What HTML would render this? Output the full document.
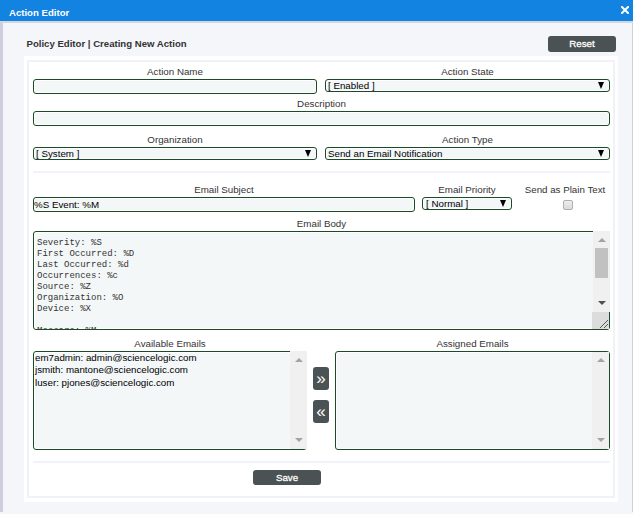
<!DOCTYPE html>
<html><head><meta charset="utf-8">
<style>
*{box-sizing:border-box;margin:0;padding:0}
html,body{width:633px;height:514px;overflow:hidden;background:#f5f6fa;font-family:"Liberation Sans",sans-serif;font-size:9.75px;color:#333}
.a{position:absolute}
.t{position:absolute;line-height:11px;white-space:nowrap}
.c{text-align:center}
.inp{position:absolute;border:1px solid #1c4a26;border-radius:3px;background:#f3f7f8;box-shadow:inset 0 0 0 1px #fff}
.sel{position:absolute;border:1px solid #1c4a26;border-radius:3px;background:#f3f7f8;box-shadow:inset 0 0 0 1px #fff;color:#000;line-height:11px;white-space:nowrap;overflow:hidden}
.arr{position:absolute;top:2px;width:6px;height:7px;background:#000;clip-path:polygon(0 0,100% 0,50% 100%)}
.btn{position:absolute;background:#4b5253;border-radius:3px;color:#fff;text-align:center}
.sep{position:absolute;height:2px;background:#f2f3f8}
.sb{position:absolute;background:#f0f0f0}
.up{position:absolute;width:0;height:0;border-left:4px solid transparent;border-right:4px solid transparent;border-bottom:4px solid #a3a3a3}
.dn{position:absolute;width:0;height:0;border-left:4px solid transparent;border-right:4px solid transparent;border-top:4px solid #a3a3a3}
.mono{font-family:"Liberation Mono",monospace;font-size:9px;line-height:11px;color:#333;white-space:pre}
</style></head><body>
<!-- title bar -->
<div class="a" style="left:0;top:0;width:633px;height:21px;background:#1283e1"></div>
<div class="t" style="left:9px;top:7px;color:#fff;font-weight:bold;font-size:9.6px">Action Editor</div>
<svg class="a" style="left:621px;top:6px" width="8" height="8" viewBox="0 0 8 8"><path d="M1 1L7 7M7 1L1 7" stroke="#fff" stroke-width="2" stroke-linecap="square"/></svg>
<div class="a" style="left:0;top:21px;width:633px;height:2px;background:#d3d5df"></div>
<div class="a" style="left:0;top:23px;width:3px;height:489px;background:#cdd0dc"></div>
<div class="a" style="left:632px;top:23px;width:1px;height:489px;background:#cdd0dc"></div>

<!-- header -->
<div class="t" style="left:26.5px;top:38px;font-weight:bold;color:#333;font-size:9.6px">Policy Editor | Creating New Action</div>
<div class="btn" style="left:548px;top:36px;width:68px;height:16px;line-height:16px;-webkit-text-stroke:0.3px #fff">Reset</div>

<!-- panel -->
<div class="a" style="left:24px;top:56px;width:594px;height:446px;background:#fff"></div>
<div class="a" style="left:27px;top:60px;width:588px;height:438px;border:2px solid #f1f2f7"></div>

<!-- row 1 -->
<div class="t c" style="left:33px;top:66px;width:284px">Action Name</div>
<div class="inp" style="left:33px;top:79px;width:284px;height:15px"></div>
<div class="t c" style="left:325px;top:66px;width:285px">Action State</div>
<div class="sel" style="left:325px;top:79px;width:285px;height:13px;padding-left:2px">[ Enabled ]<div class="arr" style="left:272px"></div></div>

<!-- row 2 -->
<div class="t c" style="left:33px;top:98px;width:577px">Description</div>
<div class="inp" style="left:33px;top:111px;width:577px;height:15px"></div>

<!-- row 3 -->
<div class="t c" style="left:33px;top:134px;width:284px">Organization</div>
<div class="sel" style="left:33px;top:147px;width:284px;height:13px;padding-left:2px">[ System ]<div class="arr" style="left:271px"></div></div>
<div class="t c" style="left:325px;top:134px;width:285px">Action Type</div>
<div class="sel" style="left:325px;top:147px;width:285px;height:13px;padding-left:2px">Send an Email Notification<div class="arr" style="left:272px"></div></div>

<div class="sep" style="left:33px;top:171px;width:577px"></div>

<!-- row 4 -->
<div class="t c" style="left:33px;top:184px;width:382px">Email Subject</div>
<div class="inp" style="left:33px;top:197px;width:382px;height:15px;color:#000;line-height:13px;padding-left:0px">%S Event: %M</div>
<div class="t c" style="left:422px;top:184px;width:90px">Email Priority</div>
<div class="sel" style="left:422px;top:197px;width:90px;height:13px;padding-left:3px">[ Normal ]<div class="arr" style="left:77px"></div></div>
<div class="t c" style="left:520px;top:184px;width:90px">Send as Plain Text</div>
<div class="a" style="left:563px;top:200px;width:10px;height:10px;border:1px solid #b0b0b0;border-radius:2px;background:linear-gradient(#ededed,#dadada)"></div>

<!-- body -->
<div class="t c" style="left:33px;top:218px;width:577px">Email Body</div>
<div class="inp" style="left:33px;top:231px;width:577px;height:99px;overflow:hidden">
<div class="mono a" style="left:3px;top:6px">Severity: %S
First Occurred: %D
Last Occurred: %d
Occurrences: %c
Source: %Z
Organization: %O
Device: %X

Message: %M</div>
</div>
<div class="sb" style="left:593px;top:231px;width:17px;height:81px"></div>
<div class="up" style="left:598px;top:238px"></div>
<div class="a" style="left:595px;top:248px;width:13px;height:30px;background:#c1c1c1"></div>
<div class="dn" style="left:598px;top:301px;border-top-color:#505050"></div>
<div class="a" style="left:592px;top:312px;width:17px;height:17px;background:#dcdcdc"></div>
<svg class="a" style="left:596px;top:316px" width="13" height="13" viewBox="0 0 13 13"><path d="M4 12L12 4M8 12L12 8" stroke="#555" stroke-width="1"/></svg>

<!-- emails -->
<div class="t c" style="left:33px;top:338px;width:274px">Available Emails</div>
<div class="inp" style="left:33px;top:351px;width:274px;height:99px;color:#000"></div>
<div class="t" style="left:35px;top:352px;color:#000;line-height:12.4px">em7admin: admin@sciencelogic.com<br>jsmith: mantone@sciencelogic.com<br>luser: pjones@sciencelogic.com</div>
<div class="sb" style="left:290px;top:351px;width:17px;height:98px"></div>
<div class="up" style="left:295px;top:358px"></div>
<div class="dn" style="left:295px;top:438px"></div>

<div class="btn" style="left:313px;top:367px;width:16px;height:23px;line-height:24px;font-weight:normal;font-size:17px">&raquo;</div>
<div class="btn" style="left:313px;top:400px;width:16px;height:23px;line-height:23px;font-weight:normal;font-size:17px">&laquo;</div>

<div class="t c" style="left:335px;top:338px;width:275px">Assigned Emails</div>
<div class="inp" style="left:335px;top:351px;width:275px;height:99px"></div>
<div class="sb" style="left:592px;top:352px;width:17px;height:97px"></div>
<div class="up" style="left:597px;top:358px"></div>
<div class="dn" style="left:597px;top:438px"></div>

<div class="sep" style="left:33px;top:461px;width:577px"></div>
<div class="btn" style="left:253px;top:470px;width:68px;height:15px;line-height:15px;-webkit-text-stroke:0.3px #fff">Save</div>
</body></html>
